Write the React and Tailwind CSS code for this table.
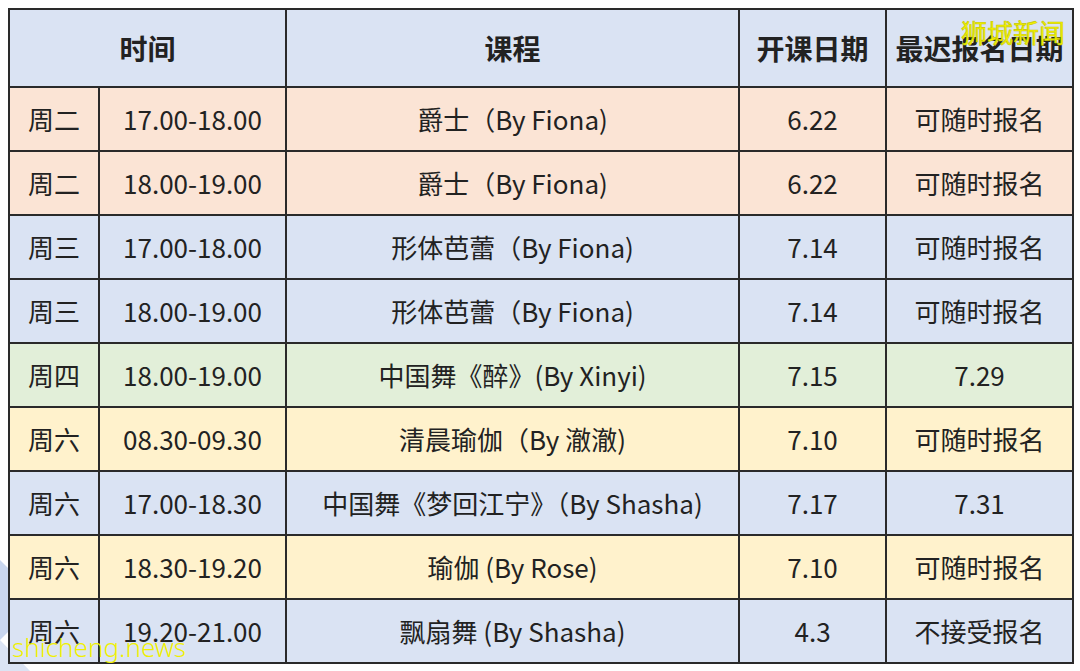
import React from "react";

const rows = [
  { day: "周二", time: "17.00-18.00", course: "爵士（By Fiona)", start: "6.22", last: "可随时报名", bg: "bg-[#fbe4d5]" },
  { day: "周二", time: "18.00-19.00", course: "爵士（By Fiona)", start: "6.22", last: "可随时报名", bg: "bg-[#fbe4d5]" },
  { day: "周三", time: "17.00-18.00", course: "形体芭蕾（By Fiona)", start: "7.14", last: "可随时报名", bg: "bg-[#dae3f3]" },
  { day: "周三", time: "18.00-19.00", course: "形体芭蕾（By Fiona)", start: "7.14", last: "可随时报名", bg: "bg-[#dae3f3]" },
  { day: "周四", time: "18.00-19.00", course: "中国舞《醉》(By Xinyi)", start: "7.15", last: "7.29", bg: "bg-[#e2efd9]" },
  { day: "周六", time: "08.30-09.30", course: "清晨瑜伽（By 澈澈)", start: "7.10", last: "可随时报名", bg: "bg-[#fff2cc]" },
  { day: "周六", time: "17.00-18.30", course: "中国舞《梦回江宁》（By Shasha)", start: "7.17", last: "7.31", bg: "bg-[#dae3f3]" },
  { day: "周六", time: "18.30-19.20", course: "瑜伽 (By Rose)", start: "7.10", last: "可随时报名", bg: "bg-[#fff2cc]" },
  { day: "周六", time: "19.20-21.00", course: "飘扇舞 (By Shasha)", start: "4.3", last: "不接受报名", bg: "bg-[#dae3f3]" },
];

const cell = "border-2 border-[#2a2a2a] text-center align-middle p-0";

export default function App() {
  return (
    <div
      className="relative w-[1080px] h-[671px] bg-white overflow-hidden text-[#222]"
      style={{ fontFamily: '"Noto Sans CJK SC", "Noto Sans", sans-serif' }}
    >
      <svg className="absolute left-0 top-0" width="1080" height="671">
        <polygon points="0,560 40,600 0,640" fill="#c9d6ee" />
        <polygon points="0,640 30,671 0,671" fill="#dbe4f4" />
      </svg>
      <div className="relative pl-[8px] pt-[8px]">
        <table className="table-fixed border-collapse w-[1064px] text-[26px] leading-none">
          <colgroup>
            <col className="w-[90px]" />
            <col className="w-[187px]" />
            <col className="w-[453px]" />
            <col className="w-[147px]" />
            <col className="w-[187px]" />
          </colgroup>
          <thead>
            <tr className="h-[78px] bg-[#dae3f3] text-[28px]">
              <th colSpan={2} className={cell + " font-bold"}>时间</th>
              <th className={cell + " font-bold"}>课程</th>
              <th className={cell + " font-bold"}>开课日期</th>
              <th className={cell + " font-bold"}>最迟报名日期</th>
            </tr>
          </thead>
          <tbody>
            {rows.map((r, i) => (
              <tr key={i} className={"h-[64px] " + r.bg}>
                <td className={cell}>{r.day}</td>
                <td className={cell}>{r.time}</td>
                <td className={cell}>{r.course}</td>
                <td className={cell}>{r.start}</td>
                <td className={cell}>{r.last}</td>
              </tr>
            ))}
          </tbody>
        </table>
      </div>
      <div
        className="absolute left-[961px] top-[19px] text-[26px] leading-none text-[#f2f200]"
        style={{ WebkitTextStroke: "0.6px #c8c800" }}
      >
        狮城新闻
      </div>
      <div
        className="absolute left-[12px] top-[634px] text-[26px] leading-none text-[#f0f000]"
        style={{ fontFamily: '"Noto Sans", sans-serif', fontWeight: 300 }}
      >
        shicheng.news
      </div>
    </div>
  );
}
